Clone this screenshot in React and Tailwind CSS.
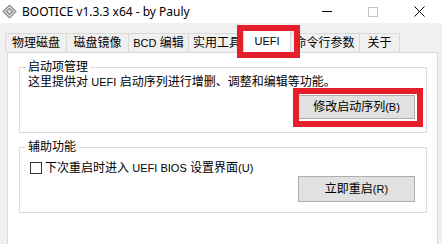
// App.jsx
import React from "react";

const ui = { fontFamily: '"Liberation Sans", "Noto Sans CJK SC", sans-serif' };

// latin runs in the reference are drawn a touch smaller than the CJK text
const L = ({ children }) => <span className="text-[11px]">{children}</span>;

const tabs = [
  { label: "物理磁盘", w: "w-[61px]" },
  { label: "磁盘镜像", w: "w-[62px]" },
  { label: <><L>BCD</L> 编辑</>, w: "w-[60px]", key: "bcd" },
  { label: "实用工具", w: "w-[57px]" },
  { label: <L>UEFI</L>, w: "w-[48px]", active: true, key: "uefi" },
  { label: "命令行参数", w: "w-[70px]" },
  { label: "关于", w: "w-[41px]", last: true },
];

const AppIcon = () => (
  <svg width="15" height="15" viewBox="0 0 15 15">
    <path d="M7.5 1 L14 7.5 L7.5 14 L1 7.5 Z" fill="#d8d8d8" stroke="#555" strokeWidth="1" />
    <path d="M7.5 3.5 L11.5 7.5 L7.5 11.5 L3.5 7.5 Z" fill="#9a9a9a" />
    <circle cx="7.5" cy="7.5" r="1.2" fill="#fff" />
  </svg>
);

const Button = ({ children, className = "" }) => (
  <div
    className={`w-[117px] flex items-center justify-center bg-[#e1e1e1] border border-[#adadad] text-[12px] text-black ${className}`}
  >
    {children}
  </div>
);

const Group = ({ title, children }) => (
  <fieldset className="h-[73px] border border-[#dcdcdc] bg-white">
    <legend className="ml-[6px] px-[2px] text-[12px] leading-[14px] text-black">{title}</legend>
    {children}
  </fieldset>
);

export default function App() {
  return (
    <div className="relative w-[442px] h-[244px] overflow-hidden bg-[#f0f0f0] select-none" style={ui}>
      {/* title bar */}
      <div className="h-[23px] bg-white flex items-center">
        <div className="ml-[2px] flex items-center">
          <AppIcon />
        </div>
        <span className="ml-[5px] text-[12px] text-black" style={{ fontFamily: '"Noto Sans", sans-serif' }}>
          BOOTICE v1.3.3 x64 - by Pauly
        </span>
        <div className="ml-auto flex items-center h-full">
          <div className="w-[46px] h-full flex items-center justify-center">
            <div className="w-[10px] h-px bg-black" />
          </div>
          <div className="w-[46px] h-full flex items-center justify-center">
            <div className="w-[10px] h-[10px] border border-[#c4c4c4]" />
          </div>
          <div className="w-[46px] h-full flex items-center justify-center">
            <svg width="11" height="11" viewBox="0 0 11 11">
              <path d="M0.5 0.5 L10.5 10.5 M10.5 0.5 L0.5 10.5" stroke="#000" strokeWidth="1" />
            </svg>
          </div>
        </div>
      </div>

      {/* tab strip */}
      <div className="mt-[7px] pl-[5px] h-[22px] flex items-end">
        {tabs.map((t) =>
          t.active ? (
            <div
              key={t.key || t.label}
              className={`${t.w} relative z-10 -ml-[2px] -mr-[2px] -mb-px h-[23px] bg-white border-t border-l border-r border-[#d9d9d9] flex items-center justify-center text-[12px] text-black`}
            >
              <span className="-mt-[2px]">{t.label}</span>
            </div>
          ) : (
            <div
              key={t.key || t.label}
              className={`${t.w} h-[19px] border-t border-l ${t.last ? "border-r" : ""} border-[#d9d9d9] flex items-center justify-center text-[12px] text-black`}
            >
              <span>{t.label}</span>
            </div>
          )
        )}
      </div>

      {/* tab page */}
      <div className="ml-[7px] w-[431px] h-[200px] bg-white border border-[#d9d9d9] pt-[7px] pl-[11px] pr-[10px] flex flex-col gap-[7px]">
        <Group title="启动项管理">
          <div className="flex flex-col">
            <div className="mt-px ml-[8px] text-[12px] leading-[14px] text-black">
              这里提供对 <L>UEFI</L> 启动序列进行增删、调整和编辑等功能。
            </div>
            <Button className="self-end mr-[11px] mt-[6px] h-[24px]">
              修改启动序列<L>(B)</L>
            </Button>
          </div>
        </Group>

        <Group title="辅助功能">
          <div className="flex flex-col">
            <div className="mt-[7px] ml-[10px] h-[14px] flex items-center text-[12px] leading-[14px] text-black">
              <span className="w-[12px] h-[12px] border border-[#333] bg-white" />
              <span className="ml-[3px]">
                下次重启时进入 <L>UEFI BIOS</L> 设置界面<L>(U)</L>
              </span>
            </div>
            <Button className="self-end mr-[11px] mt-px h-[26px]">
              立即重启<L>(R)</L>
            </Button>
          </div>
        </Group>
      </div>

      {/* red highlight annotations */}
      <div className="absolute left-[237px] top-[25px] w-[63px] h-[33px] border-[6px] border-[#e41f2b] z-20 pointer-events-none" />
      <div className="absolute left-[293px] top-[88px] w-[130px] h-[39px] border-[6px] border-[#e41f2b] z-20 pointer-events-none" />
    </div>
  );
}
